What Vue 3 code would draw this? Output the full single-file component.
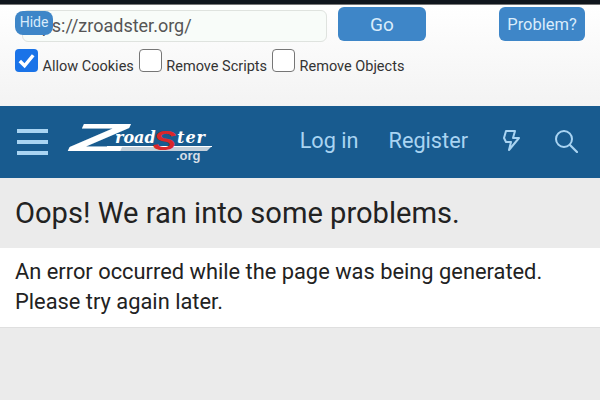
<template>
  <div class="page">
    <div class="status-strip"></div>

    <div class="toolbar">
      <button class="hide-btn">Hide</button>
      <div class="url-row">
        <input class="url-input" value="https://zroadster.org/" />
        <button class="btn go-btn">Go</button>
        <button class="btn problem-btn">Problem?</button>
      </div>
      <div class="options">
        <label v-for="opt in options" :key="opt.label" class="option">
          <span class="box" :class="{ 'box--on': opt.checked }">
            <svg v-if="opt.checked" viewBox="0 0 24 24" width="23" height="23">
              <path d="M5 12.5l5 5 9-11" fill="none" stroke="#fff" stroke-width="3.6" />
            </svg>
          </span>
          <span class="option-label">{{ opt.label }}</span>
        </label>
      </div>
    </div>

    <header class="site-header">
      <div class="burger">
        <span></span>
        <span></span>
        <span></span>
      </div>
      <div class="logo">
        <svg viewBox="0 0 150 42" width="150" height="42">
          <path d="M1 30L50 25H145L140 30z" fill="#c4d0da" />
          <path d="M40 25.5H145" stroke="#fff" stroke-width="1" />
          <text x="0" y="30" class="logo-z" transform="translate(3 0) scale(2.5 1)">Z</text>
          <text x="48" y="22" class="logo-word">road</text>
          <text x="110" y="22" class="logo-word logo-word--wide">ter</text>
          <text x="66" y="29" class="logo-s" transform="scale(1.3 1)">S</text>
          <text x="109" y="39" class="logo-org">.org</text>
        </svg>
      </div>
      <nav class="nav">
        <a class="nav-link login">Log in</a>
        <a class="nav-link register">Register</a>
        <svg class="bolt" viewBox="0 0 18 24" width="18" height="24">
          <path d="M4 2H13L11 9H17L7 21L9 13H4L2 9Z" fill="none" stroke="#a9d4f2" stroke-width="2" stroke-linejoin="round" />
        </svg>
        <svg class="search" viewBox="0 0 24 24" width="24" height="24">
          <circle cx="10" cy="10" r="8" fill="none" stroke="#a9d4f2" stroke-width="2" />
          <path d="M16 16l7 7" stroke="#a9d4f2" stroke-width="2.2" stroke-linecap="round" />
        </svg>
      </nav>
    </header>

    <div class="title-bar">
      <h1>Oops! We ran into some problems.</h1>
    </div>
    <div class="message">
      An error occurred while the page was being generated.<br />
      Please try again later.
    </div>
  </div>
</template>

<script setup>
const options = [
  { label: 'Allow Cookies', checked: true },
  { label: 'Remove Scripts', checked: false },
  { label: 'Remove Objects', checked: false },
]
</script>

<style>
html,
body {
  margin: 0;
  overflow: hidden;
}
</style>

<style scoped>
.page {
  width: 600px;
  height: 400px;
  background: #ebebeb;
  font-family: Roboto, "Liberation Sans", sans-serif;
  overflow: hidden;
}

.status-strip {
  height: 5px;
  background: #10161d;
  border-bottom: 1px solid #777;
  box-sizing: border-box;
}

.toolbar {
  position: relative;
  height: 101px;
  box-sizing: border-box;
  padding: 2px 15px 0 15px;
  background: linear-gradient(#fff, #f3f3f3);
}

.hide-btn {
  position: absolute;
  left: 15px;
  top: 6px;
  width: 38px;
  height: 24px;
  padding: 0 0 3px;
  border: 0;
  border-radius: 8px;
  background: #3e86c8;
  color: #d9ecfb;
  font: 14px Roboto, sans-serif;
}

.url-row {
  display: flex;
  align-items: flex-start;
}

.url-input {
  width: 305px;
  height: 32px;
  margin: 3px 11px 0 7px;
  padding: 0 0 2px 0;
  text-indent: -3px;
  box-sizing: border-box;
  border: 1px solid #dfe3df;
  border-radius: 6px;
  background: #f8fcf9;
  color: #555;
  font: 18px Roboto, sans-serif;
  outline: none;
}

.btn {
  height: 34px;
  border: 0;
  border-radius: 6px;
  background: #3e86c8;
  color: #d9ecfb;
  font-family: Roboto, sans-serif;
}

.go-btn {
  width: 88px;
  font-size: 19px;
}

.problem-btn {
  width: 86px;
  margin-left: 73px;
  font-size: 16.5px;
  padding: 0;
}

.options {
  display: flex;
  margin-top: 7px;
}

.option {
  display: flex;
  align-items: flex-end;
  margin-right: 5px;
}

.box {
  width: 23px;
  height: 23px;
  box-sizing: border-box;
  border: 1.5px solid #767676;
  border-radius: 4px;
  background: #fff;
}

.box--on {
  border: 0;
  background: #1a73e8;
}

.box svg {
  display: block;
}

.option-label {
  margin-left: 4.5px;
  color: #333;
  font-size: 14.5px;
  line-height: 17px;
  position: relative;
  top: 3px;
}

.site-header {
  display: flex;
  align-items: center;
  height: 72px;
  padding: 0 17px;
  box-sizing: border-box;
  background: #185b8f;
}

.burger {
  display: flex;
  flex-direction: column;
  gap: 7px;
  width: 31px;
}

.burger span {
  height: 4px;
  background: #a9d4f2;
}

.logo {
  margin-left: 19px;
  height: 42px;
}

.logo svg {
  display: block;
  overflow: visible;
}

.logo-z {
  font: italic 700 38px "Liberation Sans", sans-serif;
  fill: #fff;
}

.logo-word {
  font: italic 700 16px "DejaVu Serif", serif;
  fill: #fff;
}

.logo-word--wide {
  letter-spacing: 1px;
}

.logo-s {
  font: italic 700 27px "Liberation Sans", sans-serif;
  fill: #d8272b;
}

.logo-org {
  font: 700 13px "Liberation Sans", sans-serif;
  fill: #d5dee6;
}

.nav {
  display: flex;
  align-items: center;
  margin-left: auto;
  padding-bottom: 3px;
}

.nav-link {
  color: #a9d4f2;
  font-size: 21.7px;
  margin-right: 30px;
}

.register {
  margin-right: 34px;
}

.bolt {
  margin-right: 34px;
}

.search {
  margin-right: 5px;
}

.title-bar {
  height: 70px;
  display: flex;
  align-items: center;
  padding: 0 15px;
  box-sizing: border-box;
}

.title-bar h1 {
  margin: 0;
  color: #222;
  font-size: 29.1px;
  font-weight: 400;
}

.message {
  height: 80px;
  box-sizing: border-box;
  padding: 9px 15px;
  background: #fff;
  border-bottom: 1px solid #dfdfdf;
  color: #222;
  font-size: 21.85px;
  line-height: 30px;
}
</style>
